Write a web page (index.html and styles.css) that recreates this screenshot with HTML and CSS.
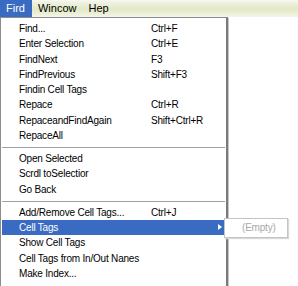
FILE: index.html
```html
<!DOCTYPE html>
<html lang="en">
<head>
  <meta charset="UTF-8">
  <title>Find menu</title>
  <link rel="stylesheet" href="styles.css">
</head>
<body>
  <!-- menu bar -->
  <div class="menubar">
    <span class="top active">Fird</span>
    <span class="top">Wincow</span>
    <span class="top">Hep</span>
  </div>

  <!-- dropdown -->
  <div class="dropdown">
    <div class="item"><span class="label">Find...</span><span class="key">Ctrl+F</span></div>
    <div class="item"><span class="label">Enter Selection</span><span class="key">Ctrl+E</span></div>
    <div class="item"><span class="label">FindNext</span><span class="key">F3</span></div>
    <div class="item"><span class="label">FindPrevious</span><span class="key">Shift+F3</span></div>
    <div class="item"><span class="label">Findin Cell Tags</span></div>
    <div class="item"><span class="label">Repace</span><span class="key">Ctrl+R</span></div>
    <div class="item"><span class="label">RepaceandFindAgain</span><span class="key">Shift+Ctrl+R</span></div>
    <div class="item"><span class="label">RepaceAll</span></div>
    <div class="sep"></div>
    <div class="item"><span class="label">Open Selected</span></div>
    <div class="item"><span class="label">Scrdl toSelectior</span></div>
    <div class="item"><span class="label">Go Back</span></div>
    <div class="sep"></div>
    <div class="item"><span class="label">Add/Remove Cell Tags...</span><span class="key">Ctrl+J</span></div>
    <div class="item hover">
      <span class="label">Cell Tags</span>
      <span class="arrow"></span>
      <div class="submenu">(Empty)</div>
    </div>
    <div class="item"><span class="label">Show Cell Tags</span></div>
    <div class="item"><span class="label">Cell Tags from In/Out Nanes</span></div>
    <div class="item"><span class="label">Make Index...</span></div>
  </div>
</body>
</html>
```

FILE: styles.css
```css
/* ===== base ===== */
* {
  box-sizing: border-box;
  margin: 0;
  padding: 0;
}

html, body {
  width: 298px;
  height: 286px;
  overflow: hidden;
  background: #fff;
  font-family: "Liberation Sans", Arial, sans-serif;
  font-size: 10px;
  color: #000;
}

/* ===== menu bar ===== */
.menubar {
  display: flex;
  height: 17px;
  background: linear-gradient(#f7f8f2 0, #eef1df 3px, #e2e9c4 9px, #ecf0d8 14px, #f4f5ee 17px);
}
.top {
  padding: 0 6px;
  line-height: 17px;
  font-size: 11px;
}
.top.active {
  background: #3a6bc3;
  color: #fff;
  padding: 0 7px 0 6px;
}

/* ===== dropdown ===== */
.dropdown {
  width: 228px;
  padding: 3px 1px 5px 1px;
  background: #fff;
  border: 1px solid #8c8c8c;
  border-right: 2px solid #7a7a7a;
  box-shadow: 1px 1px 0 #c8c8c8;
  letter-spacing: -0.2px;
}
.item {
  position: relative;
  display: flex;
  height: 15.25px;
  line-height: 15px;
  padding-left: 17px;
}
.item .label {
  width: 132px;
}
.item .key {
  flex: 1;
}
.item.hover {
  background: #3a6bc3;
  color: #fff;
}
.arrow {
  position: absolute;
  left: 216px;
  top: 4px;
  width: 0;
  height: 0;
  border-top: 3.5px solid transparent;
  border-bottom: 3.5px solid transparent;
  border-left: 4px solid #fff;
}
.sep {
  height: 1px;
  margin: 4px 0 3px;
  background: #a0a0a0;
}

/* ===== submenu (overlay) ===== */
.submenu {
  position: absolute;
  left: 222px;
  top: -2px;
  width: 64px;
  height: 20px;
  line-height: 18px;
  padding-left: 17px;
  background: #fff;
  color: #a8a8a8;
  border: 1px solid #c4c4c4;
  box-shadow: 1px 1px 1px #d8d8d8;
}
```
